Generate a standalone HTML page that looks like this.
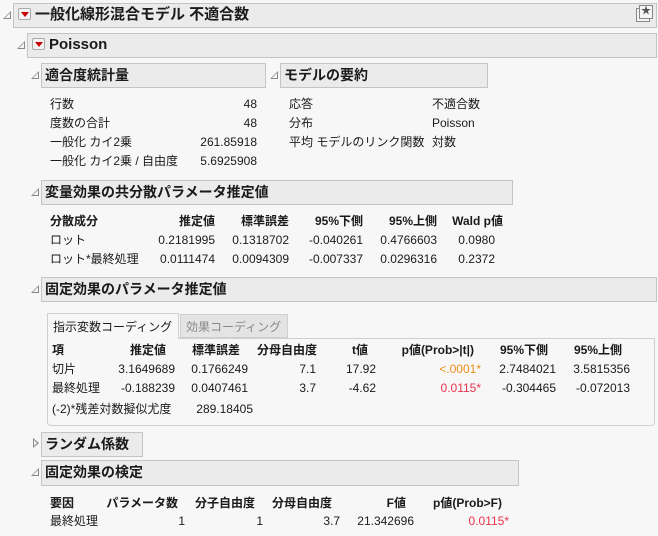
<!DOCTYPE html>
<html><head><meta charset="utf-8"><style>
*{margin:0;padding:0;box-sizing:border-box}
body{width:658px;height:536px;background:#f7f7f7;position:relative;overflow:hidden;font-family:"Liberation Sans","Noto Sans CJK JP",sans-serif;font-size:12px;color:#1a1a1a}
.a{position:absolute;white-space:nowrap;line-height:14px}
.b{font-weight:bold}
.h{position:absolute;background:#ebebeb;border:1px solid #c4c4c4;font-weight:bold;font-size:14px;line-height:22px;padding-left:3px;white-space:nowrap}
.t{position:absolute;width:0;height:0;border-left:8px solid transparent;border-bottom:8px solid #888}
.t:after{content:"";position:absolute;left:-6px;top:2px;border-left:5px solid transparent;border-bottom:5px solid #f7f7f7}
.m{display:inline-block;width:13px;height:12px;border:1px solid #aaa;border-radius:2px;background:#f4f4f4;vertical-align:-1px;margin-right:4px;position:relative}
.m:after{content:"";position:absolute;left:2px;top:3px;border-left:4px solid transparent;border-right:4px solid transparent;border-top:5px solid #c00}
.red{color:#e8344e}.org{color:#f08c1c}
</style></head><body>
<div class="t" style="left:3px;top:11px"></div>
<div class="h" style="left:13px;top:3px;width:644px;height:25px;font-size:15px;padding-left:4px"><span class="m"></span>一般化線形混合モデル 不適合数
<div style="position:absolute;right:6px;top:4px;width:14px;height:14px;border:1px solid #888;background:#f4f4f4"></div>
<div style="position:absolute;right:3px;top:1px;width:14px;height:14px;border:1px solid #888;background:#f4f4f4;font-size:10px;line-height:12px;text-align:center;color:#555;font-weight:normal">★</div></div>

<div class="t" style="left:17px;top:41px"></div>
<div class="h" style="left:27px;top:33px;width:630px;height:25px;font-size:15px;padding-left:4px"><span class="m"></span>Poisson</div>

<div class="t" style="left:31px;top:71px"></div>
<div class="h" style="left:41px;top:63px;width:225px;height:25px">適合度統計量</div>
<div class="t" style="left:270px;top:71px"></div>
<div class="h" style="left:280px;top:63px;width:208px;height:25px">モデルの要約</div>

<div class="a" style="left:50px;top:97px">行数</div><div class="a" style="right:401px;top:97px">48</div>
<div class="a" style="left:50px;top:116px">度数の合計</div><div class="a" style="right:401px;top:116px">48</div>
<div class="a" style="left:50px;top:135px">一般化 カイ2乗</div><div class="a" style="right:401px;top:135px">261.85918</div>
<div class="a" style="left:50px;top:154px">一般化 カイ2乗 / 自由度</div><div class="a" style="right:401px;top:154px">5.6925908</div>
<div class="a" style="left:289px;top:97px">応答</div><div class="a" style="left:432px;top:97px">不適合数</div>
<div class="a" style="left:289px;top:116px">分布</div><div class="a" style="left:432px;top:116px">Poisson</div>
<div class="a" style="left:289px;top:135px">平均 モデルのリンク関数</div><div class="a" style="left:432px;top:135px">対数</div>

<div class="t" style="left:31px;top:188px"></div>
<div class="h" style="left:41px;top:180px;width:472px;height:25px">変量効果の共分散パラメータ推定値</div>
<div class="a b" style="left:50px;top:214px">分散成分</div>
<div class="a b" style="right:443px;top:214px">推定値</div>
<div class="a b" style="right:369px;top:214px">標準誤差</div>
<div class="a b" style="right:295px;top:214px">95%下側</div>
<div class="a b" style="right:221px;top:214px">95%上側</div>
<div class="a b" style="right:155px;top:214px">Wald p値</div>
<div class="a" style="left:50px;top:233px">ロット</div>
<div class="a" style="right:443px;top:233px">0.2181995</div><div class="a" style="right:369px;top:233px">0.1318702</div><div class="a" style="right:295px;top:233px">-0.040261</div><div class="a" style="right:221px;top:233px">0.4766603</div><div class="a" style="right:163px;top:233px">0.0980</div>
<div class="a" style="left:50px;top:252px">ロット*最終処理</div>
<div class="a" style="right:443px;top:252px">0.0111474</div><div class="a" style="right:369px;top:252px">0.0094309</div><div class="a" style="right:295px;top:252px">-0.007337</div><div class="a" style="right:221px;top:252px">0.0296316</div><div class="a" style="right:163px;top:252px">0.2372</div>

<div class="t" style="left:31px;top:285px"></div>
<div class="h" style="left:41px;top:277px;width:616px;height:25px">固定効果のパラメータ推定値</div>

<div style="position:absolute;left:47px;top:338px;width:608px;height:88px;border:1px solid #cfcfcf;border-radius:0 0 4px 4px;background:#f7f7f7"></div>
<div class="a" style="left:47px;top:313px;width:132px;height:26px;border:1px solid #cfcfcf;border-bottom:none;background:#f7f7f7;padding:5px 0 0 5px;line-height:16px">指示変数コーディング</div>
<div class="a" style="left:180px;top:314px;width:108px;height:24px;border:1px solid #cfcfcf;background:#e4e4e4;color:#888;padding:4px 0 0 5px;line-height:16px">効果コーディング</div>

<div class="a b" style="left:52px;top:343px">項</div>
<div class="a b" style="right:492px;top:343px">推定値</div>
<div class="a b" style="right:418px;top:343px">標準誤差</div>
<div class="a b" style="right:341px;top:343px">分母自由度</div>
<div class="a b" style="right:290px;top:343px">t値</div>
<div class="a b" style="right:184px;top:343px">p値(Prob&gt;|t|)</div>
<div class="a b" style="right:110px;top:343px">95%下側</div>
<div class="a b" style="right:36px;top:343px">95%上側</div>
<div class="a" style="left:52px;top:362px">切片</div>
<div class="a" style="right:483px;top:362px">3.1649689</div><div class="a" style="right:410px;top:362px">0.1766249</div><div class="a" style="right:342px;top:362px">7.1</div><div class="a" style="right:282px;top:362px">17.92</div><div class="a org" style="right:177px;top:362px">&lt;.0001*</div><div class="a" style="right:102px;top:362px">2.7484021</div><div class="a" style="right:28px;top:362px">3.5815356</div>
<div class="a" style="left:52px;top:381px">最終処理</div>
<div class="a" style="right:483px;top:381px">-0.188239</div><div class="a" style="right:410px;top:381px">0.0407461</div><div class="a" style="right:342px;top:381px">3.7</div><div class="a" style="right:282px;top:381px">-4.62</div><div class="a red" style="right:177px;top:381px">0.0115*</div><div class="a" style="right:102px;top:381px">-0.304465</div><div class="a" style="right:28px;top:381px">-0.072013</div>
<div class="a" style="left:52px;top:402px">(-2)*残差対数擬似尤度</div><div class="a" style="right:405px;top:402px">289.18405</div>

<div style="position:absolute;left:33px;top:438px;border-top:5px solid transparent;border-bottom:5px solid transparent;border-left:6px solid #888"></div>
<div style="position:absolute;left:34px;top:440px;border-top:3px solid transparent;border-bottom:3px solid transparent;border-left:3px solid #f7f7f7"></div>
<div class="h" style="left:41px;top:432px;width:102px;height:25px">ランダム係数</div>

<div class="t" style="left:31px;top:468px"></div>
<div class="h" style="left:41px;top:460px;width:478px;height:26px">固定効果の検定</div>
<div class="a b" style="left:50px;top:496px">要因</div>
<div class="a b" style="right:480px;top:496px">パラメータ数</div>
<div class="a b" style="right:403px;top:496px">分子自由度</div>
<div class="a b" style="right:326px;top:496px">分母自由度</div>
<div class="a b" style="right:252px;top:496px">F値</div>
<div class="a b" style="right:156px;top:496px">p値(Prob&gt;F)</div>
<div class="a" style="left:50px;top:514px">最終処理</div>
<div class="a" style="right:473px;top:514px">1</div><div class="a" style="right:395px;top:514px">1</div><div class="a" style="right:318px;top:514px">3.7</div><div class="a" style="right:244px;top:514px">21.342696</div><div class="a red" style="right:149px;top:514px">0.0115*</div>
</body></html>
